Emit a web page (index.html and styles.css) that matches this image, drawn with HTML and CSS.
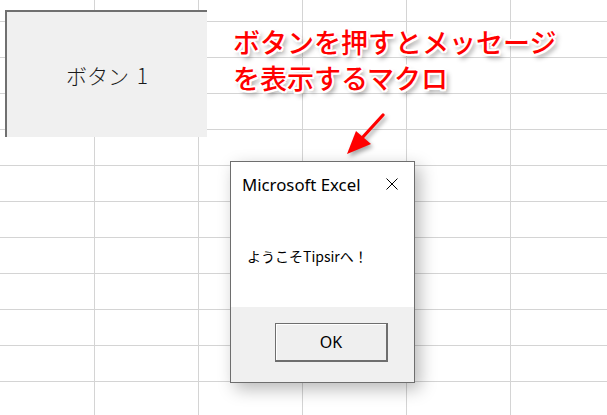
FILE: index.html
```html
<!DOCTYPE html>
<html lang="ja">
<head>
    <meta charset="UTF-8">
    <meta name="viewport" content="width=device-width, initial-scale=1.0">
    <title>ボタンを押すとメッセージを表示するマクロ</title>
    <link rel="stylesheet" href="styles.css">
</head>
<body>
    <div class="sheet">
        <div class="sheet-button">ボタン 1</div>

        <div class="note">
            <div>ボタンを押すとメッセージ</div>
            <div>を表示するマクロ</div>
        </div>

        <svg class="note-arrow" width="50" height="50" viewBox="0 0 50 50">
            <line x1="41" y1="3" x2="20" y2="26" stroke="#ff0000" stroke-width="3.2" stroke-linecap="round"/>
            <polygon points="5,42 14,19 29,32" fill="#ff0000"/>
        </svg>

        <div class="msgbox">
            <div class="msgbox-title">
                <span>Microsoft Excel</span>
                <svg class="msgbox-close" width="12" height="12" viewBox="0 0 12 12">
                    <path d="M0.5 0.5 L11.5 11.5 M11.5 0.5 L0.5 11.5" stroke="#000" stroke-width="1"/>
                </svg>
            </div>
            <div class="msgbox-body">ようこそTipsirへ！</div>
            <div class="msgbox-footer">
                <button class="ok-btn">OK</button>
            </div>
        </div>
    </div>
</body>
</html>
```

FILE: styles.css
```css
body {
    margin: 0;
    overflow: hidden;
    font-family: "Noto Sans", "Noto Sans CJK JP", sans-serif;
}
.sheet {
    position: relative;
    width: 607px;
    height: 415px;
    background-color: #fff;
    background-image:
        linear-gradient(to right, #d4d4d4 1px, transparent 1px),
        linear-gradient(to bottom, #d4d4d4 1px, transparent 1px);
    background-size: 104px 36px;
    background-position: 94px 0, 0 21px;
}
.sheet-button {
    position: absolute;
    left: 5px;
    top: 10px;
    width: 202px;
    height: 127px;
    box-sizing: border-box;
    border-left: 2px solid #707070;
    border-top: 2px solid #707070;
    background: #f0f0f0;
    display: flex;
    align-items: center;
    justify-content: center;
    font-family: "Noto Sans CJK JP", sans-serif;
    font-weight: 300;
    font-size: 21px;
    word-spacing: 3px;
    color: #1a1a1a;
}
.note {
    position: absolute;
    left: 233px;
    top: 24px;
    font-family: "Noto Sans CJK JP", sans-serif;
    font-weight: 500;
    font-size: 27px;
    line-height: 36px;
    color: #ff0000;
    text-shadow:
        -2px 0 0 #fff, 2px 0 0 #fff, 0 -2px 0 #fff, 0 2px 0 #fff,
        -1.5px -1.5px 0 #fff, 1.5px -1.5px 0 #fff, -1.5px 1.5px 0 #fff, 1.5px 1.5px 0 #fff,
        3px 4px 5px rgba(0, 0, 0, 0.45);
}
.note-arrow {
    position: absolute;
    left: 342px;
    top: 112px;
    filter: drop-shadow(2px 3px 2px rgba(0, 0, 0, 0.35));
}
.msgbox {
    position: absolute;
    left: 230px;
    top: 161px;
    width: 185px;
    height: 222px;
    box-sizing: border-box;
    border: 1px solid #6e6e6e;
    background: #fff;
    box-shadow: 5px 6px 16px rgba(0, 0, 0, 0.28);
    display: flex;
    flex-direction: column;
}
.msgbox-title {
    height: 44px;
    display: flex;
    align-items: center;
    justify-content: space-between;
    padding: 0 16px 0 11px;
    font-size: 16.8px;
    color: #000;
}
.msgbox-body {
    height: 101px;
    box-sizing: border-box;
    padding: 40px 0 0 16px;
    font-family: "Noto Sans CJK JP", sans-serif;
    font-size: 14px;
    line-height: 20px;
    color: #000;
}
.msgbox-footer {
    flex: 1;
    background: #f0f0f0;
    display: flex;
    justify-content: flex-end;
    align-items: flex-start;
    padding: 16px 26px 0 0;
}
.ok-btn {
    width: 113px;
    height: 39px;
    box-sizing: border-box;
    border: 1px solid #6e6e6e;
    border-right-width: 2px;
    border-bottom-width: 2px;
    box-shadow: inset 1px 1px 0 #fff;
    background: #efefef;
    font-family: "Noto Sans", sans-serif;
    font-size: 16px;
    color: #000;
    padding: 0;
}
```
